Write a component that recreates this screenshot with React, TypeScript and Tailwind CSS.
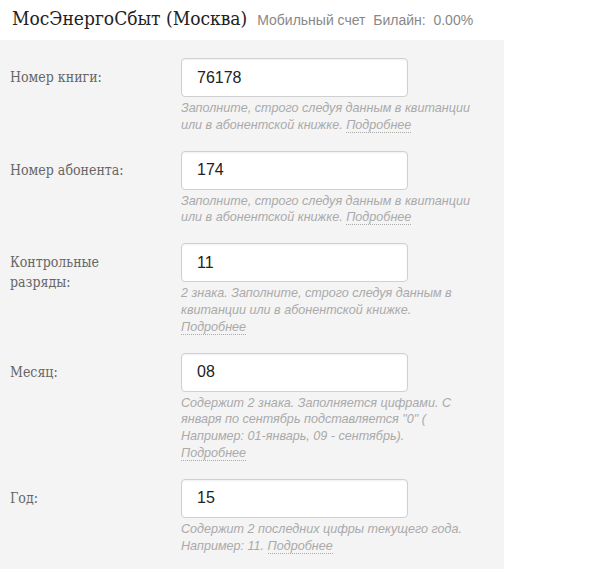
import React from "react";

const rows: { label: string[]; value: string; hint: string[] }[] = [
  {
    label: ["Номер книги:"],
    value: "76178",
    hint: ["Заполните, строго следуя данным в квитанции", "или в абонентской книжке. "],
  },
  {
    label: ["Номер абонента:"],
    value: "174",
    hint: ["Заполните, строго следуя данным в квитанции", "или в абонентской книжке. "],
  },
  {
    label: ["Контрольные", "разряды:"],
    value: "11",
    hint: ["2 знака. Заполните, строго следуя данным в", "квитанции или в абонентской книжке.", ""],
  },
  {
    label: ["Месяц:"],
    value: "08",
    hint: [
      "Содержит 2 знака. Заполняется цифрами. С",
      'января по сентябрь подставляется "0" (',
      "Например: 01-январь, 09 - сентябрь).",
      "",
    ],
  },
  {
    label: ["Год:"],
    value: "15",
    hint: ["Содержит 2 последних цифры текущего года.", "Например: 11. "],
  },
];

export default function App() {
  return (
    <div className="w-[600px] h-[582px] bg-white">
      <div className="flex items-baseline h-[40px] pl-[12px] pt-[4px]">
        <span className="text-[19px] text-[#222] font-['DejaVu_Serif_Condensed','DejaVu_Serif',serif] leading-[28px]">
          МосЭнергоСбыт (Москва)
        </span>
        <span className="ml-[10px] text-[14px] text-[#888] font-['Liberation_Sans',Arial,sans-serif]">
          Мобильный счет&nbsp; Билайн:&nbsp; 0.00%
        </span>
      </div>
      <div className="w-[504px] bg-[#f4f4f4] pt-[18px] pb-[15px] pl-[10px] flex flex-col gap-[17px]">
        {rows.map((r, i) => (
          <div key={i} className="flex">
            <div className="w-[171px] pt-[9px] text-[14px] leading-[20px] text-[#666] font-['DejaVu_Serif_Condensed','DejaVu_Serif',serif]">
              {r.label.map((l, j) => (
                <div key={j}>{l}</div>
              ))}
            </div>
            <div className="flex flex-col">
              <div className="w-[227px] h-[39px] bg-white border border-[#d0d0d0] rounded-[4px] shadow-[inset_0_1px_2px_rgba(0,0,0,0.06)] flex items-center pl-[15px] text-[16px] text-[#222] font-['Liberation_Sans',Arial,sans-serif]">
                {r.value}
              </div>
              <div className="mt-[3px] text-[12.6px] leading-[16.8px] italic text-[#aaa] font-['Liberation_Sans',Arial,sans-serif]">
                {r.hint.map((h, j) => (
                  <div key={j} className="whitespace-nowrap">
                    {h}
                    {j === r.hint.length - 1 && (
                      <span className="border-b border-dotted border-[#aaa]">Подробнее</span>
                    )}
                  </div>
                ))}
              </div>
            </div>
          </div>
        ))}
      </div>
    </div>
  );
}
